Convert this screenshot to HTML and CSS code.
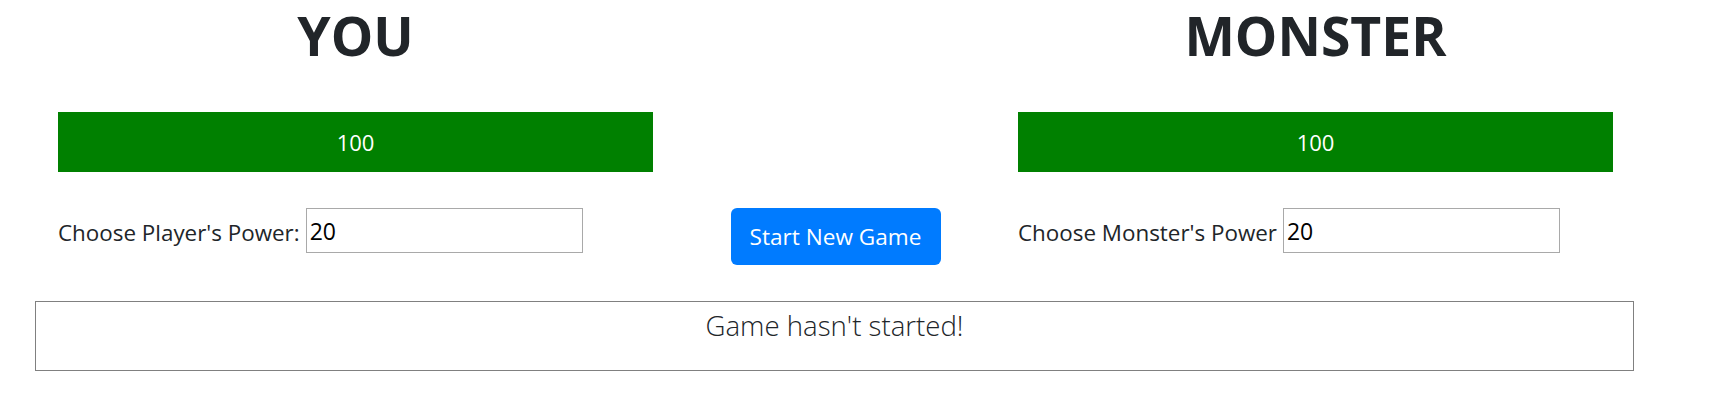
FILE: index.html
```html
<!DOCTYPE html>
<html lang="en">
<head>
<meta charset="utf-8">
<title>Monster Game</title>
<link rel="stylesheet" href="styles.css">
</head>
<body>
<div class="game">
  <div class="arena">
    <div class="side">
      <h1 class="title">YOU</h1>
      <div class="health">100</div>
      <div class="power">
        <label class="power-label" for="player-power">Choose Player's Power:</label>
        <input class="power-input" id="player-power" type="text" value="20">
      </div>
    </div>
    <div class="middle">
      <button class="btn-start" type="button">Start New Game</button>
    </div>
    <div class="side">
      <h1 class="title">MONSTER</h1>
      <div class="health">100</div>
      <div class="power">
        <label class="power-label" for="monster-power">Choose Monster's Power</label>
        <input class="power-input" id="monster-power" type="text" value="20">
      </div>
    </div>
  </div>
  <div class="log">
    <p class="log-text">Game hasn't started!</p>
  </div>
</div>
</body>
</html>
```

FILE: styles.css
```css
* {
  box-sizing: border-box;
}

html, body {
  margin: 0;
  padding: 0;
  background: #ffffff;
}

body {
  font-family: "Open Sans", "Noto Sans", sans-serif;
  color: #212529;
  width: 1716px;
  height: 405px;
  overflow: hidden;
}

.game {
  padding-top: 4px;
}

.arena {
  display: flex;
  padding-left: 58px;
}

.side {
  width: 595px;
  display: flex;
  flex-direction: column;
}

.middle {
  width: 365px;
  display: flex;
  justify-content: center;
  padding-top: 204px;
}

.title {
  margin: 0;
  font-size: 53.5px;
  line-height: 64px;
  font-weight: 700;
  text-align: center;
  color: #212529;
}

.health {
  margin-top: 44px;
  height: 60px;
  background: #008000;
  color: #ffffff;
  font-size: 22px;
  line-height: 60px;
  text-align: center;
}

.power {
  margin-top: 36px;
  display: flex;
  align-items: center;
  gap: 6px;
}

.power-label {
  font-size: 22.4px;
  line-height: 36px;
  padding-top: 4px;
  white-space: nowrap;
}

.power-input {
  width: 277px;
  height: 45px;
  border: 1px solid #a9a9a9;
  padding: 0 3px;
  font-family: "Open Sans", "Noto Sans", sans-serif;
  font-size: 23px;
  color: #000000;
  background: #ffffff;
  margin: 0;
  outline: none;
}

.btn-start {
  width: 210px;
  height: 57px;
  border: 0;
  border-radius: 6px;
  background: #007bff;
  color: #ffffff;
  font-family: "Open Sans", "Noto Sans", sans-serif;
  font-size: 22.6px;
  line-height: 57px;
  padding: 0;
  cursor: pointer;
}

.log {
  margin-top: 36px;
  margin-left: 35px;
  width: 1599px;
  height: 70px;
  border: 1px solid #808080;
}

.log-text {
  margin: 0;
  font-size: 27.6px;
  font-weight: 300;
  line-height: 46px;
  text-align: center;
  color: #212529;
}
```
